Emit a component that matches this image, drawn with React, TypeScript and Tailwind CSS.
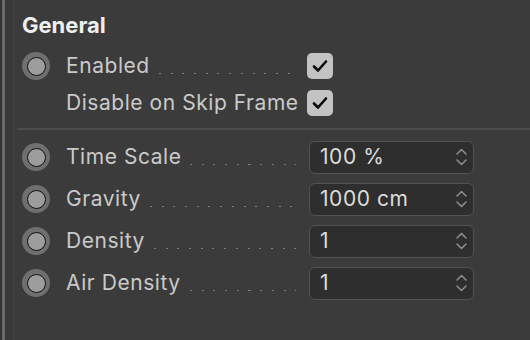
import React from 'react';

const font = { fontFamily: 'Inter, "Liberation Sans", sans-serif' };

function Radio() {
  return (
    <div className="flex h-[28px] w-[28px] shrink-0 items-center justify-center rounded-full bg-[#6f6f6f]">
      <div className="h-[19px] w-[19px] rounded-full border-[1.5px] border-[#111] bg-[#9d9d9d]" />
    </div>
  );
}

function Leader() {
  return (
    <div className="ml-[9px] mt-[14px] h-px min-w-0 flex-1 bg-[repeating-linear-gradient(to_right,#7e7e7e_0_2px,transparent_2px_11.7px)]" />
  );
}

function Check() {
  return (
    <div className="ml-[11px] flex h-[26px] w-[26px] shrink-0 items-center justify-center rounded-[5px] bg-[#c3c3c3]">
      <svg width="26" height="26" viewBox="0 0 26 26" fill="none">
        <path d="M7 13.5 L11 17.5 L19 8.5" stroke="#0a0a0a" strokeWidth="2.6" strokeLinecap="round" strokeLinejoin="round" />
      </svg>
    </div>
  );
}

function Field({ value }: { value: string }) {
  return (
    <div className="ml-[13px] flex h-[33px] w-[165px] shrink-0 items-center justify-between rounded-[6px] border-[1.5px] border-[#525252] bg-[#2e2e2e] pl-[10px] pr-[5px]">
      <span className="text-[21px] tracking-[0.55px] text-[#dcdcdc]">{value}</span>
      <svg width="13" height="26" viewBox="0 0 13 26" fill="none">
        <path d="M2 10 L6.5 5.5 L11 10" stroke="#8e8e8e" strokeWidth="1.5" strokeLinecap="round" strokeLinejoin="round" />
        <path d="M2 16 L6.5 20.5 L11 16" stroke="#8e8e8e" strokeWidth="1.5" strokeLinecap="round" strokeLinejoin="round" />
      </svg>
    </div>
  );
}

function Row({ label, radio, h, children }: { label: string; radio: boolean; h: string; children: React.ReactNode }) {
  return (
    <div className={`flex ${h} items-center pl-[8px]`}>
      {radio ? <Radio /> : <div className="w-[28px] shrink-0" />}
      <div className="ml-[16px] flex w-[230px] items-center">
        <span className="shrink-0 whitespace-nowrap text-[21px] tracking-[0.55px] text-[#cacaca]">{label}</span>
        <Leader />
      </div>
      {children}
    </div>
  );
}

export default function App() {
  return (
    <div className="flex h-[340px] w-[530px] overflow-hidden bg-[#3b3b3b]" style={font}>
      <div className="w-[2px] bg-[#333333]" />
      <div className="w-[3px] bg-[#6a6a6a]" />
      <div className="w-[8px] bg-[#383838]" />
      <div className="w-[1px] bg-[#454545]" />
      <div className="flex flex-1 flex-col">
        <div className="mt-[11px] h-[28px] pl-[8px] text-[22px] font-bold leading-[28px] text-[#efefef]">General</div>
        <div className="mt-[9px]">
          <Row label="Enabled" radio h="h-[36px]"><Check /></Row>
          <Row label="Disable on Skip Frame" radio={false} h="h-[38px]"><Check /></Row>
        </div>
        <div className="ml-[3px] mt-[6px] h-[2px] bg-[#4c4c4c]" />
        <div className="mt-[6px]">
          <Row label="Time Scale" radio h="h-[42px]"><Field value="100 %" /></Row>
          <Row label="Gravity" radio h="h-[42px]"><Field value="1000 cm" /></Row>
          <Row label="Density" radio h="h-[42px]"><Field value="1" /></Row>
          <Row label="Air Density" radio h="h-[42px]"><Field value="1" /></Row>
        </div>
      </div>
    </div>
  );
}
